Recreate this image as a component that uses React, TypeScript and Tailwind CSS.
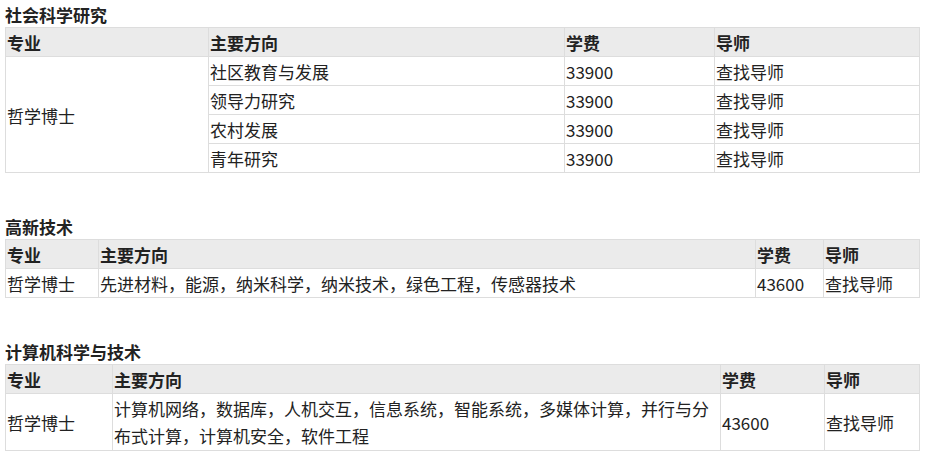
import type { ReactNode } from 'react';

const th = 'border border-[#dddddd] bg-[#ebebeb] font-bold text-left align-middle pl-[1px] pt-[1px]';
const td = 'border border-[#dddddd] text-left align-middle pl-[1px] pt-[1px]';

function Section({
  title,
  widths,
  rows,
  first,
}: {
  title: string;
  widths: number[];
  rows: ReactNode;
  first?: boolean;
}) {
  return (
    <div className={first ? '' : 'mt-[39px]'}>
      <h3 className="font-bold pt-[2px] leading-[25px] text-[17px] text-[#222]">{title}</h3>
      <table className="w-[914px] table-fixed border-collapse">
        <colgroup>
          {widths.map((w, i) => (
            <col key={i} style={{ width: w }} />
          ))}
        </colgroup>
        <thead>
          <tr>
            <th className={th}>专业</th>
            <th className={th}>主要方向</th>
            <th className={th}>学费</th>
            <th className={th}>导师</th>
          </tr>
        </thead>
        <tbody>{rows}</tbody>
      </table>
    </div>
  );
}

const social = ['社区教育与发展', '领导力研究', '农村发展', '青年研究'];

export default function App() {
  return (
    <div
      className="bg-white px-[5px] text-[17px] leading-[27px] text-[#222]"
      style={{ fontFamily: '"Noto Sans CJK SC", "Liberation Sans", sans-serif' }}
    >
      <Section
        first
        title="社会科学研究"
        widths={[203, 356, 150, 205]}
        rows={social.map((d, i) => (
          <tr key={d}>
            {i === 0 && (
              <td className={td} rowSpan={4}>
                哲学博士
              </td>
            )}
            <td className={td}>{d}</td>
            <td className={td}>33900</td>
            <td className={td}>查找导师</td>
          </tr>
        ))}
      />
      <Section
        title="高新技术"
        widths={[93, 657, 68, 96]}
        rows={
          <tr>
            <td className={td}>哲学博士</td>
            <td className={td}>先进材料，能源，纳米科学，纳米技术，绿色工程，传感器技术</td>
            <td className={td}>43600</td>
            <td className={td}>查找导师</td>
          </tr>
        }
      />
      <Section
        title="计算机科学与技术"
        widths={[107, 608, 104, 95]}
        rows={
          <tr>
            <td className={td}>哲学博士</td>
            <td className={`${td} pb-[1px]`}>
              计算机网络，数据库，人机交互，信息系统，智能系统，多媒体计算，并行与分布式计算，计算机安全，软件工程
            </td>
            <td className={td}>43600</td>
            <td className={td}>查找导师</td>
          </tr>
        }
      />
    </div>
  );
}
